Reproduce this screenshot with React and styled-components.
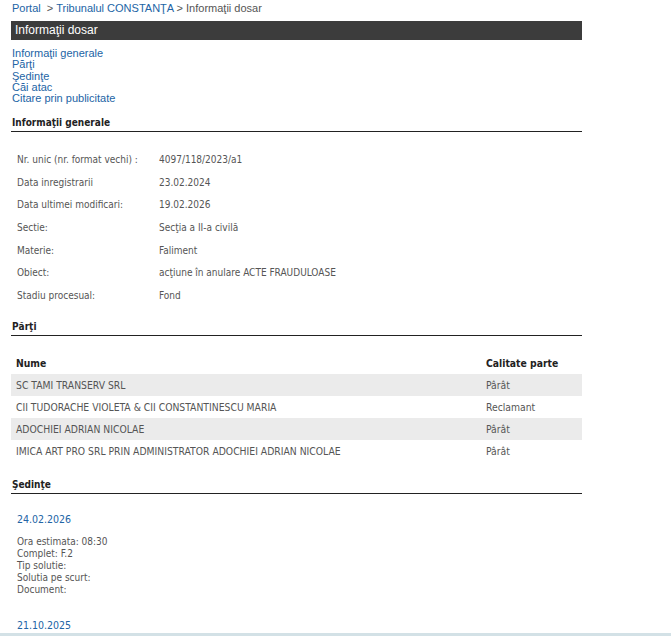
import React from 'react';
import styled, { createGlobalStyle } from 'styled-components';

const GlobalStyle = createGlobalStyle`
  html, body {
    margin: 0;
    padding: 0;
    background: #fff;
  }
  body {
    font-family: "Liberation Sans", Arial, sans-serif;
  }
`;

const Page = styled.div`
  width: 671px;
  height: 636px;
  overflow: hidden;
  position: relative;
  border-bottom: 3px solid #d3e1e6;
  box-sizing: border-box;
`;

const Wrap = styled.div`
  width: 571px;
  margin-left: 11px;
`;

const Crumbs = styled.div`
  font-size: 11px;
  color: #555;
  height: 21px;
  padding-top: 2px;
  padding-left: 1px;
  box-sizing: border-box;
  a {
    color: #2264a5;
    text-decoration: none;
  }
`;

const TitleBar = styled.div`
  background: #3c3c3c;
  color: #fff;
  font-size: 12px;
  height: 19px;
  line-height: 19px;
  padding-left: 4px;
  margin-bottom: 8px;
`;

const Nav = styled.div`
  display: flex;
  flex-direction: column;
  font-size: 11px;
  line-height: 11.3px;
  margin-left: 1px;
  a {
    color: #2264a5;
    text-decoration: none;
  }
`;

const SectionTitle = styled.div`
  font-family: "DejaVu Sans Condensed", "DejaVu Sans", sans-serif;
  font-weight: bold;
  font-size: 10px;
  color: #222;
  border-bottom: 1px solid #222;
  padding: 0 0 3px 1px;
  margin-top: ${p => p.top}px;
`;

const InfoTable = styled.div`
  display: grid;
  grid-template-columns: 142px 1fr;
  grid-auto-rows: 22.6px;
  align-items: center;
  padding: 16px 0 0 6px;
  font-family: "DejaVu Sans Condensed", "DejaVu Sans", sans-serif;
  font-size: 10px;
  color: #555;
`;

const PartyTable = styled.div`
  margin-top: 16px;
  font-family: "DejaVu Sans Condensed", "DejaVu Sans", sans-serif;
  font-size: 10.3px;
  color: #555;
`;

const PartyRow = styled.div`
  display: grid;
  grid-template-columns: 470px 1fr;
  height: 22px;
  align-items: center;
  padding-left: 5px;
  background: ${p => (p.shaded ? '#ebebeb' : 'transparent')};
  color: ${p => (p.head ? '#222' : '#555')};
  font-weight: ${p => (p.head ? 'bold' : 'normal')};
`;

const Hearing = styled.div`
  padding: 19px 0 0 6px;
  font-family: "DejaVu Sans Condensed", "DejaVu Sans", sans-serif;
  font-size: 10px;
  color: #555;
`;

const HearingDate = styled.div`
  color: #2264a5;
  font-size: 10.5px;
  margin-bottom: 11px;
`;

const HearingLines = styled.div`
  display: flex;
  flex-direction: column;
  line-height: 12px;
  margin-bottom: 23px;
`;

const info = [
  ['Nr. unic (nr. format vechi) :', '4097/118/2023/a1'],
  ['Data inregistrarii', '23.02.2024'],
  ['Data ultimei modificari:', '19.02.2026'],
  ['Sectie:', 'Secţia a II-a civilă'],
  ['Materie:', 'Faliment'],
  ['Obiect:', 'acţiune în anulare ACTE FRAUDULOASE'],
  ['Stadiu procesual:', 'Fond'],
];

const parties = [
  ['SC TAMI TRANSERV SRL', 'Pârât'],
  ['CII TUDORACHE VIOLETA & CII CONSTANTINESCU MARIA', 'Reclamant'],
  ['ADOCHIEI ADRIAN NICOLAE', 'Pârât'],
  ['IMICA ART PRO SRL PRIN ADMINISTRATOR ADOCHIEI ADRIAN NICOLAE', 'Pârât'],
];

const App = () => (
  <Page>
    <GlobalStyle />
    <Wrap>
      <Crumbs>
        <a href="#">Portal</a> &nbsp;&gt; <a href="#">Tribunalul CONSTANŢA</a> &gt; Informaţii dosar
      </Crumbs>
      <TitleBar>Informaţii dosar</TitleBar>
      <Nav>
        <a href="#">Informaţii generale</a>
        <a href="#">Părţi</a>
        <a href="#">Şedinţe</a>
        <a href="#">Căi atac</a>
        <a href="#">Citare prin publicitate</a>
      </Nav>

      <SectionTitle top={13}>Informaţii generale</SectionTitle>
      <InfoTable>
        {info.map(([k, v]) => (
          <React.Fragment key={k}>
            <span>{k}</span>
            <span>{v}</span>
          </React.Fragment>
        ))}
      </InfoTable>

      <SectionTitle top={14}>Părţi</SectionTitle>
      <PartyTable>
        <PartyRow head>
          <span>Nume</span>
          <span>Calitate parte</span>
        </PartyRow>
        {parties.map(([n, c], i) => (
          <PartyRow key={n} shaded={i % 2 === 0}>
            <span>{n}</span>
            <span>{c}</span>
          </PartyRow>
        ))}
      </PartyTable>

      <SectionTitle top={17}>Şedinţe</SectionTitle>
      <Hearing>
        <HearingDate>24.02.2026</HearingDate>
        <HearingLines>
          <span>Ora estimata: 08:30</span>
          <span>Complet: F.2</span>
          <span>Tip solutie:</span>
          <span>Solutia pe scurt:</span>
          <span>Document:</span>
        </HearingLines>
        <HearingDate>21.10.2025</HearingDate>
      </Hearing>
    </Wrap>
  </Page>
);

export default App;
